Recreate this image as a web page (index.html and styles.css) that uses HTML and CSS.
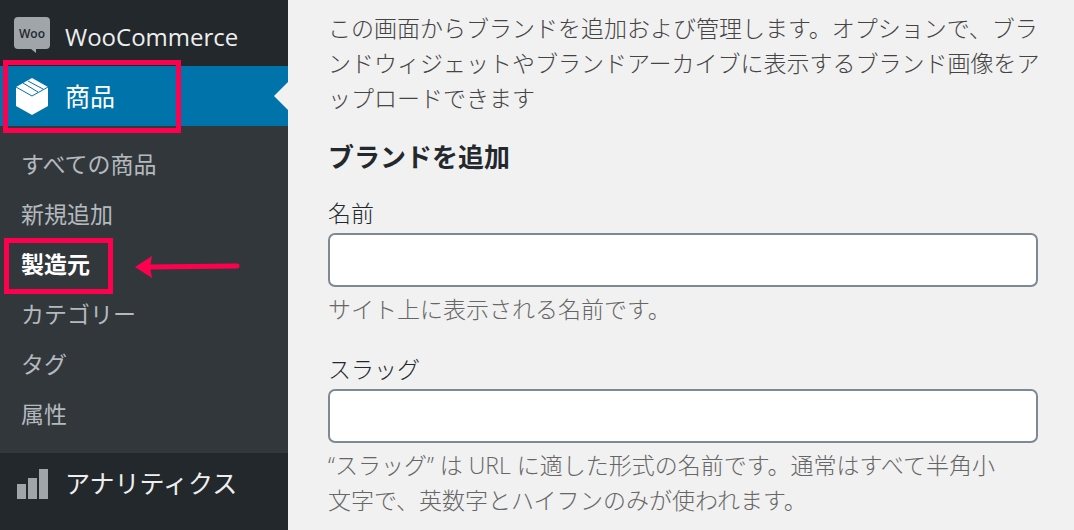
FILE: index.html
```html
<!DOCTYPE html>
<html lang="ja">
<head>
  <meta charset="UTF-8" />
  <meta name="viewport" content="width=device-width, initial-scale=1" />
  <title>ブランドを追加</title>
  <link rel="stylesheet" href="styles.css">
</head>
<body>

  <!-- Admin menu -->
  <nav id="admin-menu">
    <ul class="menu">
      <li class="menu-item">
        <a href="#">
          <svg class="icon" width="36" height="36" viewBox="0 0 36 36">
            <path d="M4 -1H32Q36 -1 36 3V27Q36 31 32 31H22V35L17 31H4Q0 31 0 27V3Q0 -1 4 -1Z" fill="#a0a5aa" />
            <text class="woo" x="18" y="20" text-anchor="middle">Woo</text>
          </svg>
          <span class="latin">WooCommerce</span>
        </a>
      </li>
      <li class="menu-item current">
        <a href="#">
          <svg class="icon" width="36" height="36" viewBox="0 0 36 36">
            <path d="M18 0L34 9V28L18 37L2 28V9Z" fill="#fff" />
            <path d="M2 9L18 18L34 9M9 5L24 14M14 3L29 11" fill="none" stroke="#0073aa" stroke-width="1" />
          </svg>
          <span>商品</span>
        </a>
        <div class="mark mark-products"></div>
      </li>
    </ul>
    <ul class="submenu">
      <li><a href="#">すべての商品</a></li>
      <li><a href="#">新規追加</a></li>
      <li class="active">
        <a href="#">製造元</a>
        <div class="mark mark-brand"></div>
        <svg class="arrow" width="106" height="24" viewBox="0 0 106 24">
          <path d="M12 13L102 12" stroke="#ff004f" stroke-width="5" stroke-linecap="round" />
          <path d="M0 13L17 2L15 13L17 24Z" fill="#ff004f" />
        </svg>
      </li>
      <li><a href="#">カテゴリー</a></li>
      <li><a href="#">タグ</a></li>
      <li><a href="#">属性</a></li>
    </ul>
    <ul class="menu">
      <li class="menu-item">
        <a href="#">
          <svg class="icon" width="36" height="36" viewBox="0 0 36 36">
            <path d="M3 19H12V34H3ZM14 13H23V34H14ZM25 4H34V34H25Z" fill="#a0a5aa" />
          </svg>
          <span>アナリティクス</span>
        </a>
      </li>
    </ul>
  </nav>

  <!-- Add brand form -->
  <main id="content">
    <p class="intro">この画面からブランドを追加および管理します。オプションで、ブランドウィジェットやブランドアーカイブに表示するブランド画像をアップロードできます</p>
    <h2>ブランドを追加</h2>
    <form>
      <div class="form-field">
        <label for="tag-name">名前</label>
        <input type="text" id="tag-name" name="tag-name" />
        <p>サイト上に表示される名前です。</p>
      </div>
      <div class="form-field">
        <label for="tag-slug">スラッグ</label>
        <input type="text" id="tag-slug" name="slug" />
        <p>“スラッグ” は URL に適した形式の名前です。通常はすべて半角小文字で、英数字とハイフンのみが使われます。</p>
      </div>
    </form>
  </main>

</body>
</html>
```

FILE: styles.css
```css
* {
  box-sizing: border-box;
}
body {
  margin: 0;
  min-height: 100vh;
  display: flex;
  background: #f1f1f1;
  color: #444;
  font-family: "Open Sans", "Noto Sans CJK JP", sans-serif;
  font-size: 23px;
  font-weight: 300;
  line-height: 35px;
}

/* Admin menu */
#admin-menu {
  flex: 0 0 288px;
  padding-top: 6px;
  background: #23282d;
}
#admin-menu ul {
  margin: 0;
  padding: 0;
  list-style: none;
}
#admin-menu a {
  color: #eee;
  text-decoration: none;
}
.menu-item {
  position: relative;
}
.menu-item a {
  display: flex;
  align-items: center;
  gap: 15px;
  height: 60px;
  padding-left: 14px;
  font-size: 25px;
  font-weight: 400;
}
.latin {
  font-size: 24px;
}
.icon {
  flex: none;
  overflow: visible;
}
.woo {
  font-family: "Open Sans", sans-serif;
  font-size: 12px;
  font-weight: 600;
  fill: #23282d;
}
.current {
  background: #0073aa;
}
#admin-menu .current a {
  color: #fff;
}
.current::after {
  content: "";
  position: absolute;
  top: 16px;
  right: 0;
  border: 14px solid transparent;
  border-left: none;
  border-right-color: #f1f1f1;
}
#admin-menu .submenu {
  padding: 13px 0 14px;
  background: #32373c;
}
.submenu li {
  position: relative;
}
.submenu a {
  display: block;
  padding-left: 21px;
  font-weight: 400;
  line-height: 50px;
}
#admin-menu .submenu a {
  color: #b4b9be;
}
#admin-menu .submenu .active a {
  color: #fff;
  font-weight: 700;
}

/* Red highlights */
.mark {
  position: absolute;
  border: 5px solid #ff004f;
  pointer-events: none;
}
.mark-products {
  top: -6px;
  left: 3px;
  z-index: 1;
  width: 178px;
  height: 73px;
}
.mark-brand {
  top: -1px;
  left: 4px;
  width: 109px;
  height: 56px;
}
.arrow {
  position: absolute;
  top: 15px;
  left: 135px;
}

/* Form */
#content {
  flex: 1;
  padding: 11px 16px 0 40px;
}
#content p {
  margin: 0;
}
h2 {
  margin: 24px 0 21px;
  color: #23282d;
  font-size: 26px;
  font-weight: 700;
  line-height: 35px;
}
.form-field {
  margin-bottom: 25px;
  padding-right: 20px;
}
.form-field label {
  display: block;
  color: #23282d;
}
.form-field input {
  display: block;
  width: 100%;
  height: 54px;
  margin: 2px 0 5px;
  padding: 0 12px;
  border: 2px solid #7e8993;
  border-radius: 7px;
  background: #fff;
  color: #32373c;
  font: inherit;
}
#content .form-field p {
  padding-right: 36px;
  color: #666;
}
```
